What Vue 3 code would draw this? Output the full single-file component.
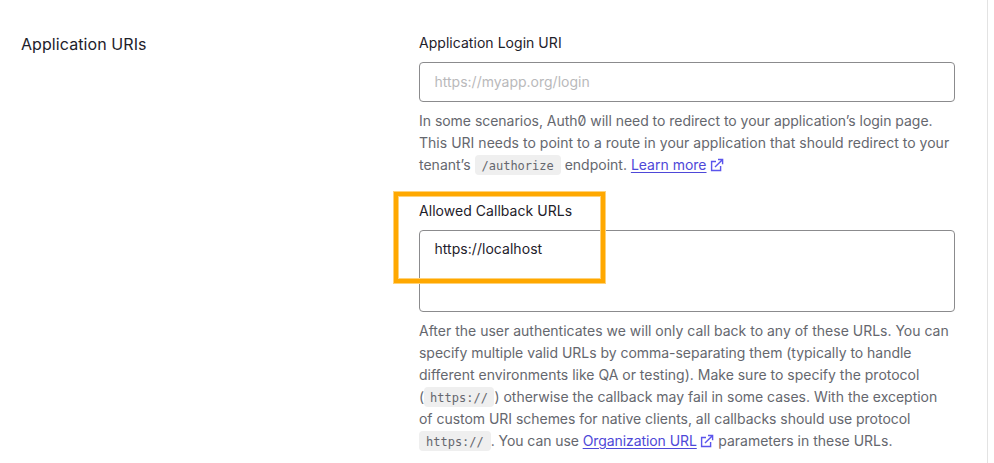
<script setup>
import { ref } from 'vue'

const loginUri = ref('')
const callbackUrls = ref('https://localhost')
</script>

<template>
  <main class="page">
    <section class="panel">
      <h2 class="title">Application URIs</h2>
      <div class="fields">
        <div class="field">
          <label class="label" for="login-uri">Application Login URI</label>
          <input id="login-uri" v-model="loginUri" class="control" type="text" placeholder="https://myapp.org/login" />
          <p class="help">
            <span class="tight">In some scenarios, Auth0 will need to redirect to your application’s login page.</span><br />
            <span class="loose">This URI needs to point to a route in your application that should redirect to your</span><br />
            tenant’s <code>/authorize</code> endpoint. <a class="link">Learn more</a>
            <svg class="external" viewBox="0 0 14 14"><path d="M6 3.5H1.6v9h9V8M8 1.5h4.6V6.2M12.4 1.7L5 9.1" /></svg>
          </p>
        </div>
        <div class="field callbacks">
          <label class="label" for="callbacks">Allowed Callback URLs</label>
          <textarea id="callbacks" v-model="callbackUrls" class="control area" spellcheck="false"></textarea>
          <p class="help">
            After the user authenticates we will only call back to any of these URLs. You can<br />
            <span class="tight">specify multiple valid URLs by comma-separating them (typically to handle</span><br />
            different environments like QA or testing). Make sure to specify the protocol<br />
            <span class="code-line">(<code>https://</code>) otherwise the callback may fail in some cases. With the exception</span><br />
            <span class="tight">of custom URI schemes for native clients, all callbacks should use protocol</span><br />
            <code>https://</code><span class="tighter">. You can use <a class="link">Organization URL</a></span>
            <svg class="external" viewBox="0 0 14 14"><path d="M6 3.5H1.6v9h9V8M8 1.5h4.6V6.2M12.4 1.7L5 9.1" /></svg>
            parameters in these URLs.
          </p>
          <div class="highlight"></div>
        </div>
      </div>
    </section>
  </main>
</template>

<style>
body {
  background: #fff;
}
</style>

<style scoped>
.page {
  box-sizing: border-box;
  width: 994px;
  height: 463px;
  overflow: hidden;
  font-family: Inter, sans-serif;
  font-feature-settings: "zero";
  color: #1e212a;
}
.panel {
  box-sizing: border-box;
  display: grid;
  grid-template-columns: 398px 536px;
  width: 988px;
  height: 463px;
  padding: 32px 0 0 21px;
  border-right: 1px solid #e3e3e3;
}
.title {
  margin: 0;
  font-size: 16px;
  font-weight: 400;
  line-height: 24px;
  letter-spacing: 0.08px;
}
.label {
  display: block;
  font-size: 14px;
  line-height: 22px;
  letter-spacing: 0.04px;
}
.control {
  display: block;
  box-sizing: border-box;
  width: 536px;
  height: 40px;
  margin: 8px 0 0;
  padding: 0 14.5px 2px;
  border: 1px solid #8b8b8d;
  border-radius: 4px;
  outline: none;
  background: #fff;
  font: 14px/22px Inter, sans-serif;
  color: #1e212a;
}
.control::placeholder {
  color: #b9b9bb;
  opacity: 1;
}
.area {
  height: 82px;
  padding-top: 7px;
  resize: none;
  overflow: hidden;
  letter-spacing: 0.04px;
}
.help {
  margin: 8px 0 0;
  font-size: 14px;
  line-height: 22px;
  white-space: nowrap;
  color: #65676e;
}
.tight {
  letter-spacing: -0.03px;
}
.tighter {
  letter-spacing: -0.08px;
}
.loose {
  letter-spacing: 0.02px;
}
.code-line {
  letter-spacing: -0.01px;
}
.code-line code {
  padding: 4px 6.5px 2px;
  margin-left: -0.5px;
}
.callbacks {
  position: relative;
  margin-top: 24px;
}
code {
  padding: 4px 7px 2px;
  border-radius: 4px;
  background: #efefef;
  font: 12px/1 "DejaVu Sans Mono", monospace;
  letter-spacing: 0;
}
.link {
  color: #4e48d8;
  text-decoration: underline;
  text-underline-offset: 2px;
}
.external {
  width: 14px;
  height: 14px;
  margin: 0 0 0 3.5px;
  vertical-align: -2px;
  margin-right: 0;
  fill: none;
  stroke: #5b55ec;
  stroke-width: 1.4;
}
.highlight {
  position: absolute;
  top: -8px;
  left: -25px;
  box-sizing: border-box;
  width: 211px;
  height: 91px;
  border: 4px solid #ffa800;
  box-shadow: 0 0 0 1px #ffd27a, inset 0 0 0 1px #ffd27a;
}
</style>
